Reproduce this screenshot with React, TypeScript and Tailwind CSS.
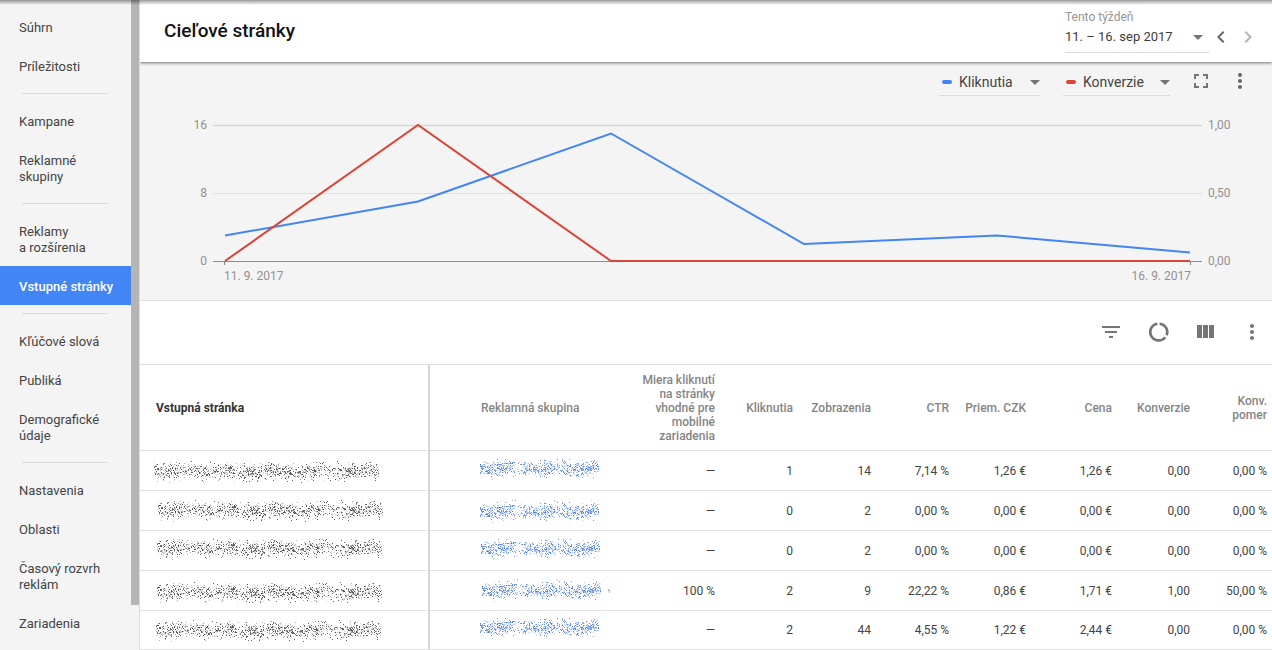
import React from "react";

type NavItem = { label: string; active?: boolean };

const navGroups: NavItem[][] = [
  [{ label: "Súhrn" }, { label: "Príležitosti" }],
  [{ label: "Kampane" }, { label: "Reklamné skupiny" }],
  [{ label: "Reklamy a\u00a0rozšírenia" }, { label: "Vstupné stránky", active: true }],
  [{ label: "Kľúčové slová" }, { label: "Publiká" }, { label: "Demografické údaje" }],
  [{ label: "Nastavenia" }, { label: "Oblasti" }, { label: "Časový rozvrh reklám" }, { label: "Zariadenia" }],
];

function Sidebar() {
  return (
    <aside className="flex shrink-0 border-r border-[#dcdcdc] bg-[#f4f4f4]">
      <nav className="w-[131px] overflow-hidden pt-[7px]">
        {navGroups.map((group, g) => (
          <React.Fragment key={g}>
            {g > 0 && <hr className="mt-2 mb-[7px] ml-[22px] w-[86px] border-[#dadada]" />}
            <ul>
              {group.map((item) => (
                <li key={item.label}>
                  <a
                    href="#"
                    className={
                      item.active
                        ? "block bg-[#4285f4] pt-[13px] pr-2 pb-[10px] pl-[19px] text-[13px] leading-4 font-medium text-white"
                        : "block pt-[13px] pr-6 pb-[10px] pl-[19px] text-[13px] leading-4 text-[#444]"
                    }
                  >
                    {item.label}
                  </a>
                </li>
              ))}
            </ul>
          </React.Fragment>
        ))}
      </nav>
      <div className="h-[93%] w-2 bg-[#b5b5b5]" />
    </aside>
  );
}

function Caret() {
  return (
    <svg className="h-[5px] w-[10px] shrink-0" viewBox="0 0 10 5" fill="#757575" aria-hidden="true">
      <path d="M0 0h10L5 5z" />
    </svg>
  );
}

function Glyph({ path, size = 24 }: { path: string; size?: number }) {
  return (
    <svg width={size} height={size} viewBox="0 0 24 24" fill="currentColor" aria-hidden="true">
      <path d={path} />
    </svg>
  );
}

const MORE =
  "M12 8c1.1 0 2-.9 2-2s-.9-2-2-2-2 .9-2 2 .9 2 2 2zm0 2c-1.1 0-2 .9-2 2s.9 2 2 2 2-.9 2-2-.9-2-2-2zm0 6c-1.1 0-2 .9-2 2s.9 2 2 2 2-.9 2-2-.9-2-2-2z";
const FULLSCREEN = "M7 14H5v5h5v-2H7v-3zm-2-4h2V7h3V5H5v5zm12 7h-3v2h5v-5h-2v3zM14 5v2h3v3h2V5h-5z";
const CHEVRON_LEFT = "M15.41 7.41 14 6l-6 6 6 6 1.41-1.41L10.83 12z";
const CHEVRON_RIGHT = "M10 6 8.59 7.41 13.17 12l-4.58 4.59L10 18l6-6z";
const FILTER = "M10 18h4v-2h-4v2zM3 6v2h18V6H3zm3 7h12v-2H6v2z";
const COLUMNS = "M10 18h5V5h-5v13zm-6 0h5V5H4v13zM16 5v13h5V5h-5z";

/* Ring split by gaps at twelve and four o'clock. */
function SegmentIcon() {
  return (
    <svg width="24" height="24" viewBox="0 0 24 24" fill="none" stroke="currentColor" strokeWidth="2.6" aria-hidden="true">
      <path d="M13.3 3.7A8.4 8.4 0 0 1 20.4 15.2M18.9 17.2A8.4 8.4 0 1 1 11.1 3.7" transform="translate(0.3 0)" />
    </svg>
  );
}

function Header() {
  return (
    <header className="relative z-10 flex h-[62px] shrink-0 items-center justify-between bg-white pl-6 shadow-[0_1px_3px_rgba(0,0,0,0.55)]">
      <h1 className="text-[19px] leading-6 font-medium text-[#111]">Cieľové stránky</h1>
      <div className="flex items-end pr-3">
        <button type="button" className="w-[144px] border-b border-[#dcdcdc] pb-[5px] text-left">
          <span className="block text-xs leading-4 text-[#959595]">Tento týždeň</span>
          <span className="mt-[2px] flex items-center justify-between pr-[6px] text-[13px] leading-5 text-[#3c3c3c]">
            11. – 16. sep 2017
            <Caret />
          </span>
        </button>
        <button type="button" aria-label="Predchádzajúce obdobie" className="mb-1 flex w-6 text-[#666]">
          <Glyph path={CHEVRON_LEFT} />
        </button>
        <button type="button" aria-label="Nasledujúce obdobie" className="mb-1 ml-[3px] flex w-6 text-[#b5b5b5]">
          <Glyph path={CHEVRON_RIGHT} />
        </button>
      </div>
    </header>
  );
}

function MetricSelect({ label, metric, swatch, width }: { label: string; metric: string; swatch: string; width: string }) {
  return (
    <div className={`relative flex items-center border-b border-[#dcdcdc] ${width}`}>
      <span className={`pointer-events-none absolute left-[3px] h-1 w-[10px] rounded-sm ${swatch}`} />
      <select
        aria-label={label}
        defaultValue={metric}
        className="h-[26px] w-full appearance-none bg-transparent pl-5 text-sm leading-5 text-[#444] outline-none"
      >
        <option>Kliknutia</option>
        <option>Konverzie</option>
      </select>
      <span className="pointer-events-none absolute right-0">
        <Caret />
      </span>
    </div>
  );
}

const clicks = [3, 7, 15, 2, 3, 1];
const conversions = [0, 1, 0, 0, 0, 0];
const xAt = (i: number) => 85 + i * 193;
const toPoints = (values: number[], max: number) =>
  values.map((v, i) => `${xAt(i)},${161 - (v / max) * 136}`).join(" ");

function ChartPanel() {
  return (
    <section className="shrink-0 border-b border-[#e0e0e0] bg-[#f4f4f4]">
      <div className="flex h-[38px] items-start justify-end pt-[7px] pr-5">
        <MetricSelect label="Prvá metrika" metric="Kliknutia" swatch="bg-[#4285f4]" width="w-[101px]" />
        <div className="w-[23px]" />
        <MetricSelect label="Druhá metrika" metric="Konverzie" swatch="bg-[#db4437]" width="w-[107px]" />
        <button type="button" aria-label="Celá obrazovka" className="ml-[19px] text-[#757575]">
          <Glyph path={FULLSCREEN} />
        </button>
        <button type="button" aria-label="Ďalšie možnosti grafu" className="ml-[15px] text-[#666]">
          <Glyph path={MORE} />
        </button>
      </div>
      <svg viewBox="0 0 1132 200" className="block w-full font-[Roboto] text-xs" fill="none" role="img" aria-label="Kliknutia a konverzie">
        <path d="M73 25.5H1062" stroke="#d6d6d6" strokeWidth="1.5" />
        <path d="M73 93.5H1062" stroke="#e0e0e0" />
        <path d="M73 161.5H1062M84.5 161v4M1050.5 161v4" stroke="#8c8c8c" strokeWidth="1.2" />
        <polyline points={toPoints(clicks, 16)} stroke="#4285f4" strokeWidth="2" />
        <polyline points={toPoints(conversions, 1)} stroke="#db4437" strokeWidth="2" />
        <g fill="#919191">
          <text x="67" y="29" textAnchor="end">16</text>
          <text x="67" y="97" textAnchor="end">8</text>
          <text x="67" y="165" textAnchor="end">0</text>
          <text x="1068" y="29">1,00</text>
          <text x="1068" y="97">0,50</text>
          <text x="1068" y="165">0,00</text>
          <text x="84" y="180">11. 9. 2017</text>
          <text x="1051" y="180" textAnchor="end">16. 9. 2017</text>
        </g>
      </svg>
    </section>
  );
}

function TableToolbar() {
  return (
    <div className="flex h-16 shrink-0 items-center justify-end gap-[23px] border-b border-[#e0e0e0] bg-white pr-2 pb-px text-[#757575]">
      <button type="button" aria-label="Filter">
        <Glyph path={FILTER} />
      </button>
      <button type="button" aria-label="Segment">
        <SegmentIcon />
      </button>
      <button type="button" aria-label="Stĺpce">
        <Glyph path={COLUMNS} />
      </button>
      <button type="button" aria-label="Viac">
        <Glyph path={MORE} />
      </button>
    </div>
  );
}

/* Deterministic speckle used to mask private values. */
function speckle(seed: number, count: number, words: number[][]) {
  let s = seed;
  const rand = () => {
    s = (s + 0x6d2b79f5) | 0;
    let t = Math.imul(s ^ (s >>> 15), 1 | s);
    t = (t + Math.imul(t ^ (t >>> 7), 61 | t)) ^ t;
    return ((t ^ (t >>> 14)) >>> 0) / 4294967296;
  };
  const width = words[words.length - 1][1];
  const layers = ["", "", ""];
  for (let n = 0; n < count; n++) {
    const x = Math.floor(rand() * width);
    const word = words.find(([a, b]) => x >= a && x < b);
    const keep = rand() < (word ? word[2] : 0.4);
    const y = Math.round(11 + (rand() + rand() + rand() + rand() - 2) * 6.6 + Math.sin(x / 7) * 0.9);
    const layer = Math.floor(rand() * 3);
    if (keep) layers[layer] += `M${x} ${y}h1v1h-1z`;
  }
  return layers;
}

const pageMask = speckle(11, 1750, [
  [0, 27, 0.95],
  [31, 64, 0.85],
  [66, 80, 1],
  [82, 108, 0.8],
  [111, 138, 0.9],
  [141, 162, 0.8],
  [164, 182, 0.6],
  [184, 204, 1],
  [207, 225, 0.8],
]);
const groupMask = speckle(29, 1150, [
  [0, 35, 0.95],
  [43, 76, 1],
  [77, 100, 0.8],
  [100, 119, 0.9],
]);

type MaskProps = { layers: string[]; color: string; dx: number; dy: number; width: number; stray?: boolean };

function Mask({ layers, color, dx, dy, width, stray }: MaskProps) {
  return (
    <svg width={width} height="24" viewBox={`0 0 ${width} 24`} className="block" fill={color} role="img" aria-label="Skryté">
      <g transform={`translate(${dx} ${dy})`}>
        <path d={layers[0]} opacity="0.16" />
        <path d={layers[1]} opacity="0.36" />
        <path d={layers[2]} opacity="0.7" />
        {stray && <path d="M126 10h1v1h1v3h-1v-2h-1z" opacity="0.45" />}
      </g>
    </svg>
  );
}

type Row = { page: [number, number]; group: [number, number]; stray?: boolean; values: string[] };

const rows: Row[] = [
  { page: [0, 1], group: [0, -2], values: ["—", "1", "14", "7,14 %", "1,26 €", "1,26 €", "0,00", "0,00 %"] },
  { page: [4, 0], group: [0, 1], values: ["—", "0", "2", "0,00 %", "0,00 €", "0,00 €", "0,00", "0,00 %"] },
  { page: [3, -2], group: [1, -2], values: ["—", "0", "2", "0,00 %", "0,00 €", "0,00 €", "0,00", "0,00 %"] },
  { page: [3, 2], group: [2, 0], stray: true, values: ["100 %", "2", "9", "22,22 %", "0,86 €", "1,71 €", "1,00", "50,00 %"] },
  { page: [2, 1], group: [0, -2], values: ["—", "2", "44", "4,55 %", "1,22 €", "2,44 €", "0,00", "0,00 %"] },
];

const metricHeads = [
  "Miera kliknutí na stránky vhodné pre mobilné zariadenia",
  "Kliknutia",
  "Zobrazenia",
  "CTR",
  "Priem. CZK",
  "Cena",
  "Konverzie",
  "Konv. pomer",
];

function PagesTable() {
  return (
    <table className="w-full table-fixed border-separate border-spacing-0 bg-white text-xs">
      <colgroup>
        <col className="w-[290px]" />
        <col />
        <col className="w-[84px]" />
        <col className="w-[78px]" />
        <col className="w-[78px]" />
        <col className="w-[78px]" />
        <col className="w-[77px]" />
        <col className="w-[86px]" />
        <col className="w-[78px]" />
        <col className="w-[82px]" />
      </colgroup>
      <thead>
        <tr className="h-[86px] leading-[14px] text-[#858585]">
          <th scope="col" className="border-r-2 border-b border-r-[#d6d6d6] border-b-[#e0e0e0] pl-4 text-left font-bold text-[#333]">
            Vstupná stránka
          </th>
          <th scope="col" className="border-b border-[#e0e0e0] pl-[51px] text-left font-medium">
            Reklamná skupina
          </th>
          {metricHeads.map((head) => (
            <th key={head} scope="col" className="border-b border-[#e0e0e0] pl-1 text-right font-medium last:pr-[5px] last:pl-6">
              {head}
            </th>
          ))}
        </tr>
      </thead>
      <tbody>
        {rows.map((row, r) => (
          <tr key={r} className="h-10 text-[#444] last:h-[39px]">
            <td className="border-r-2 border-b border-r-[#d6d6d6] border-b-[#e4e4e4] pl-[14px]">
              <Mask layers={pageMask} color="#222222" dx={row.page[0]} dy={row.page[1]} width={232} />
            </td>
            <td className="border-b border-[#e4e4e4] pl-[50px]">
              <a href="#">
                <Mask layers={groupMask} color="#2f66dd" dx={row.group[0]} dy={row.group[1]} width={132} stray={row.stray} />
              </a>
            </td>
            {row.values.map((value, i) => (
              <td key={i} className="border-b border-[#e4e4e4] text-right last:pr-[5px]">
                {value}
              </td>
            ))}
          </tr>
        ))}
      </tbody>
    </table>
  );
}

export default function App() {
  return (
    <div className="relative flex h-screen overflow-hidden bg-white font-[Roboto,sans-serif]">
      <Sidebar />
      <main className="flex min-w-0 flex-1 flex-col overflow-hidden">
        <Header />
        <ChartPanel />
        <TableToolbar />
        <PagesTable />
      </main>
      <div className="pointer-events-none absolute inset-x-0 top-0 z-20 h-[5px] bg-linear-to-b from-black/40 to-transparent" />
    </div>
  );
}
